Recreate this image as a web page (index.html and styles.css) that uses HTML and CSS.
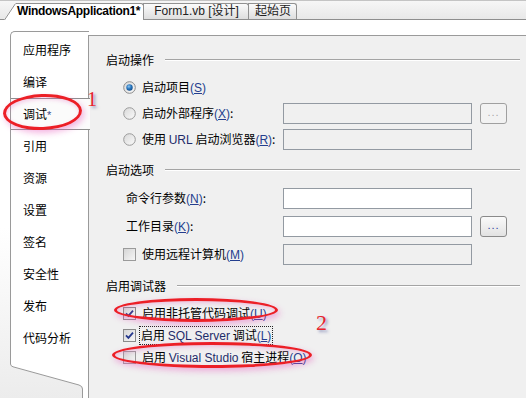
FILE: index.html
```html
<!DOCTYPE HTML>
<html>
<head>
    <meta charset="utf-8">
    <title>WindowsApplication1 - 调试</title>
    <link rel="stylesheet" href="styles.css">
</head>
<body>
<div class="doc-tabs">
    <svg class="tab-slant" width="12" height="17" viewBox="0 0 12 17">
        <polygon points="0,17 11,0 12,0 12,17" fill="#fff"/>
        <line x1="0.5" y1="17" x2="11.5" y2="0.5" stroke="#919191" stroke-width="1"/>
    </svg>
    <div class="doc-tab active">WindowsApplication1*</div>
    <div class="doc-tab">Form1.vb [设计]</div>
    <div class="doc-tab last">起始页</div>
</div>

<div class="designer">
    <div class="side">
        <ul class="nav">
            <li>应用程序</li>
            <li>编译</li>
            <li class="on">调试<span class="star">*</span></li>
            <li>引用</li>
            <li>资源</li>
            <li>设置</li>
            <li>签名</li>
            <li>安全性</li>
            <li>发布</li>
            <li>代码分析</li>
        </ul>
        <svg class="nav-foot" width="78" height="36" viewBox="0 0 78 36">
            <path d="M0 0 H78 V36 H73 V27 Q73 24 69 23 L3 5 Q0 4 0 1 Z" fill="#fff"/>
            <path d="M0.5 0 V2 Q0.5 4 3 4.8 L69 23 Q72.5 24 72.5 27 V36" fill="none" stroke="#9a9a9a" stroke-width="1"/>
        </svg>
    </div>

    <div class="panel">
        <!-- 启动操作 -->
        <div class="group">
            <div class="group-title">启动操作</div>
            <div class="row">
                <label class="opt">
                    <svg class="radio" width="13" height="13" viewBox="0 0 13 13">
                        <defs>
                            <linearGradient id="rg" x1="0" y1="0" x2="1" y2="1">
                                <stop offset="0" stop-color="#d8d8d8"/>
                                <stop offset="1" stop-color="#fbfbfb"/>
                            </linearGradient>
                            <radialGradient id="dot" cx="0.4" cy="0.35" r="0.7">
                                <stop offset="0" stop-color="#8fc6f0"/>
                                <stop offset="0.5" stop-color="#2a78c0"/>
                                <stop offset="1" stop-color="#134a86"/>
                            </radialGradient>
                        </defs>
                        <circle cx="6.5" cy="6.5" r="5.8" fill="url(#rg)" stroke="#8a8a8a"/>
                        <circle cx="6.5" cy="6.5" r="3.2" fill="url(#dot)"/>
                    </svg>
                    <span class="txt">启动项目<span class="key">(<u>S</u>)</span></span>
                </label>
            </div>
            <div class="row">
                <label class="opt">
                    <svg class="radio" width="13" height="13" viewBox="0 0 13 13">
                        <circle cx="6.5" cy="6.5" r="5.8" fill="url(#rg)" stroke="#9a9a9a"/>
                    </svg>
                    <span class="txt">启动外部程序<span class="key">(<u>X</u>)</span>:</span>
                </label>
                <div class="field off"></div>
                <div class="btn-more off">...</div>
            </div>
            <div class="row">
                <label class="opt">
                    <svg class="radio" width="13" height="13" viewBox="0 0 13 13">
                        <circle cx="6.5" cy="6.5" r="5.8" fill="url(#rg)" stroke="#9a9a9a"/>
                    </svg>
                    <span class="txt">使用 <span class="en">URL</span> 启动浏览器<span class="key">(<u>R</u>)</span>:</span>
                </label>
                <div class="field off"></div>
            </div>
        </div>

        <!-- 启动选项 -->
        <div class="group">
            <div class="group-title">启动选项</div>
            <div class="row tall">
                <label class="opt plain"><span class="txt">命令行参数<span class="key">(<u>N</u>)</span>:</span></label>
                <div class="field"></div>
            </div>
            <div class="row tall">
                <label class="opt plain"><span class="txt">工作目录<span class="key">(<u>K</u>)</span>:</span></label>
                <div class="field"></div>
                <div class="btn-more">...</div>
            </div>
            <div class="row tall">
                <label class="opt">
                    <svg class="check" width="13" height="13" viewBox="0 0 13 13">
                        <defs>
                            <linearGradient id="cg" x1="0" y1="0" x2="1" y2="1">
                                <stop offset="0" stop-color="#d4d4d4"/>
                                <stop offset="1" stop-color="#f8f8f8"/>
                            </linearGradient>
                        </defs>
                        <rect x="0.5" y="0.5" width="12" height="12" fill="url(#cg)" stroke="#9a9a9a"/>
                    </svg>
                    <span class="txt">使用远程计算机<span class="key">(<u>M</u>)</span></span>
                </label>
                <div class="field off"></div>
            </div>
        </div>

        <!-- 启用调试器 -->
        <div class="group last">
            <div class="group-title">启用调试器</div>
            <div class="row short">
                <label class="opt">
                    <svg class="check" width="13" height="13" viewBox="0 0 13 13">
                        <rect x="0.5" y="0.5" width="12" height="12" fill="url(#cg)" stroke="#8a8a8a"/>
                        <path d="M3 6.3 L5.4 8.8 L10 3.6" fill="none" stroke="#3a3a8c" stroke-width="1.8"/>
                    </svg>
                    <span class="txt">启用非托管代码调试<span class="key">(<u>U</u>)</span></span>
                </label>
            </div>
            <div class="row short">
                <label class="opt">
                    <svg class="check" width="13" height="13" viewBox="0 0 13 13">
                        <rect x="0.5" y="0.5" width="12" height="12" fill="url(#cg)" stroke="#8a8a8a"/>
                        <path d="M3 6.3 L5.4 8.8 L10 3.6" fill="none" stroke="#24388c" stroke-width="1.8"/>
                    </svg>
                    <span class="txt focus">启用 <span class="en">SQL Server</span> 调试<span class="key">(<u>L</u>)</span></span>
                </label>
            </div>
            <div class="row short">
                <label class="opt">
                    <svg class="check" width="13" height="13" viewBox="0 0 13 13">
                        <rect x="0.5" y="0.5" width="12" height="12" fill="url(#cg)" stroke="#9a9a9a"/>
                    </svg>
                    <span class="txt">启用 <span class="en">Visual Studio</span> 宿主进程<span class="key">(<u>O</u>)</span></span>
                </label>
            </div>
        </div>
    </div>
</div>

<!-- 标注 -->
<div class="mark ring-1"></div>
<div class="mark num num-1">1</div>
<div class="mark ring-2"></div>
<div class="mark ring-3"></div>
<div class="mark num num-2">2</div>
</body>
</html>
```

FILE: styles.css
```css
html, body{
    margin: 0;
    padding: 0;
}
body{
    width: 526px;
    height: 398px;
    overflow: hidden;
    background: #fff;
    color: #000;
    font-family: "Liberation Sans", "Noto Sans CJK SC", sans-serif;
    font-size: 12px;
    line-height: 16px;
}

/* 文档标签 */
div.doc-tabs{
    display: flex;
    align-items: flex-end;
    height: 18px;
    padding-left: 4px;
    border-top: 1px solid #c4c4c4;
    border-bottom: 1px solid #8e8e8e;
    background: linear-gradient(#f6f6f6, #e8e8e8);
}
svg.tab-slant{
    display: block;
    margin-bottom: -1px;
}
div.doc-tab{
    height: 15px;
    line-height: 15px;
    padding: 0 9px 0 10px;
    margin-left: -1px;
    border: 1px solid #919191;
    border-bottom: 0;
    border-radius: 0 3px 0 0;
    background: linear-gradient(#fbfbfb, #dedede);
    color: #222;
    white-space: nowrap;
}
div.doc-tab.active{
    margin-left: 0;
    padding: 0 3px 0 1px;
    border-left: 0;
    margin-bottom: -1px;
    height: 16px;
    background: #fff;
    font-weight: bold;
    letter-spacing: -0.3px;
    color: #000;
}
div.doc-tab.last{
    padding: 0 5px 0 6px;
}

/* 设计器 */
div.designer{
    display: flex;
    height: 378px;
}
div.side{
    width: 88px;
    flex: none;
    padding-top: 11px;
    background: linear-gradient(#fff 55%, #ececec);
}
ul.nav{
    list-style: none;
    margin: 0 0 0 10px;
    padding: 2px 0 8px 0;
    width: 78px;
    border: 1px solid #9a9a9a;
    border-right: 0;
    border-bottom: 0;
    border-radius: 5px 0 0 0;
    background: #fff;
}
ul.nav li{
    height: 32px;
    line-height: 32px;
    padding-left: 12px;
    font-family: "Noto Sans CJK SC", sans-serif;
}
ul.nav li.on{
    height: 30px;
    line-height: 30px;
    margin-right: -1px;
    position: relative;
    z-index: 1;
    border-top: 1px solid #8e8e8e;
    border-bottom: 1px solid #8e8e8e;
    background: #fbfbfb;
}
ul.nav li .star{
    font-family: "Liberation Sans", sans-serif;
    color: #3a4a8a;
    font-size: 11px;
}
svg.nav-foot{
    display: block;
    margin-left: 10px;
}

div.panel{
    flex: 1;
    margin-top: 15px;
    padding: 14px 6px 0 17px;
    border-top: 1px solid #9a9a9a;
    border-left: 1px solid #9a9a9a;
    background: #f0f0f0;
}

/* 分组 */
div.group + div.group{
    margin-top: 8px;
}
div.group.last{
    margin-top: 5px;
}
div.group-title{
    display: flex;
    align-items: center;
    height: 20px;
    margin-bottom: 4px;
    font-family: "Noto Sans CJK SC", sans-serif;
}
div.group-title:after{
    content: "";
    flex: 1;
    margin-left: 11px;
    border-top: 1px solid #a4a4a4;
    border-bottom: 1px solid #fff;
}
div.group.last .group-title{
    margin-bottom: 6px;
}

div.row{
    display: flex;
    align-items: center;
    height: 26px;
    padding-left: 17px;
}
div.row.tall{
    height: 28px;
}
div.row.short{
    height: 22px;
}
label.opt{
    display: flex;
    align-items: center;
    width: 160px;
    flex: none;
    white-space: nowrap;
}
label.opt.plain{
    padding-left: 3px;
    width: 157px;
}
label.opt svg{
    flex: none;
    margin-right: 6px;
}
span.txt{
    font-family: "Noto Sans CJK SC", sans-serif;
    white-space: pre;
}
span.key{
    font-family: "Liberation Sans", sans-serif;
    color: #243e8e;
}
span.key u{
    text-decoration: underline;
}
span.en{
    font-family: "Liberation Sans", sans-serif;
    color: #1e2c6a;
}
span.focus{
    outline: 1px dotted #222;
    outline-offset: 0;
    padding: 0 1px;
    margin-left: -2px;
}

div.field{
    width: 189px;
    height: 21px;
    box-sizing: border-box;
    border: 1px solid #939aa2;
    background: #fff;
}
div.field.off{
    background: #f0f0f0;
}
div.btn-more{
    width: 27px;
    height: 21px;
    box-sizing: border-box;
    margin-left: 8px;
    border: 1px solid #8a8a8a;
    border-radius: 3px;
    background: linear-gradient(#fafafa, #e2e2e2);
    color: #2a3ea0;
    font-size: 11px;
    line-height: 17px;
    text-align: center;
    letter-spacing: 1px;
}
div.btn-more.off{
    background: #f2f2f2;
    border-color: #a0a0a0;
    color: #a6a6a6;
}

/* 红色标注 */
div.mark{
    position: absolute;
    z-index: 5;
}
div.ring-1,
div.ring-2,
div.ring-3{
    border: 3px solid #ec1f27;
    border-radius: 50%;
    box-shadow: 2px 3px 6px rgba(230, 90, 190, 0.45), inset 1px 2px 4px rgba(230, 90, 190, 0.3);
}
div.ring-1{
    left: 3px;
    top: 94px;
    width: 73px;
    height: 30px;
    transform: rotate(-2deg);
}
div.ring-2{
    left: 114px;
    top: 298px;
    width: 158px;
    height: 18px;
}
div.ring-3{
    left: 112px;
    top: 342px;
    width: 194px;
    height: 20px;
}
div.num{
    font-family: "Liberation Serif", serif;
    color: #e8242c;
    text-shadow: 2px 2px 3px rgba(70, 80, 150, 0.55);
    line-height: 1;
}
div.num-1{
    left: 87px;
    top: 89px;
    font-size: 20px;
}
div.num-2{
    left: 316px;
    top: 312px;
    font-size: 22px;
}
```
